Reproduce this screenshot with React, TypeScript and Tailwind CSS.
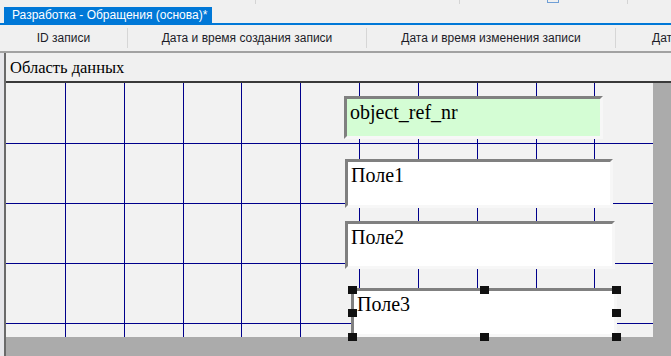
import React from 'react';

const uiFont = { fontFamily: '"Liberation Sans", Arial, sans-serif' };
const serifFont = { fontFamily: '"Liberation Serif", "Times New Roman", serif' };

const vLines = [59, 118, 177, 235, 294, 353, 412, 471, 530, 588];
const hLines = [60, 120, 180, 240];

function GridLines() {
  return (
    <svg className="absolute inset-0" width="647" height="254" shapeRendering="crispEdges">
      {vLines.map((x) => (
        <line key={'v' + x} x1={x + 0.5} y1={0} x2={x + 0.5} y2={254} stroke="#00008b" strokeWidth={1} />
      ))}
      {hLines.map((y) => (
        <line key={'h' + y} x1={0} y1={y + 0.5} x2={647} y2={y + 0.5} stroke="#00008b" strokeWidth={1} />
      ))}
    </svg>
  );
}

function Field({ label, className }: { label: string; className: string }) {
  return (
    <div
      className={`absolute border-[3px] border-t-[#808080] border-l-[#808080] border-r-[#f7f7f7] border-b-[#f7f7f7] px-[3px] pt-[2px] text-[20px] leading-[23px] text-black ${className}`}
      style={serifFont}
    >
      {label}
    </div>
  );
}

function Handle({ className }: { className: string }) {
  return <div className={`absolute w-[9px] h-[8px] bg-[#111] ${className}`} />;
}

export default function App() {
  return (
    <div className="w-[671px] h-[356px] bg-[#f0f0f0] flex flex-col overflow-hidden">
      {/* остаток панели сверху */}
      <div className="h-[7px] relative">
        <div className="absolute left-[255px] top-0 w-px h-[4px] bg-[#d4d4d4]" />
        <div className="absolute left-[459px] top-0 w-px h-[4px] bg-[#d4d4d4]" />
        <div className="absolute left-[547px] top-0 w-[12px] h-[3px] border-b border-x border-[#6f9fd6]" />
        <div className="absolute left-[627px] top-0 w-px h-[4px] bg-[#d4d4d4]" />
      </div>

      <div className="h-[16px] flex pl-[4px]">
        <div className="bg-[#0078d7] text-white text-[12px] leading-[16px] pl-[8px] pr-[5px] whitespace-nowrap" style={uiFont}>
          Разработка - Обращения (основа)*
        </div>
      </div>
      <div className="h-[2px] bg-[#0078d7]" />

      {/* заголовки колонок */}
      <div className="h-[26px] flex text-[12px] text-[#1c1c28] whitespace-nowrap" style={uiFont}>
        <div className="w-[127px] flex items-center justify-center">ID записи</div>
        <div className="w-px my-[3px] bg-[#d6d6d6]" />
        <div className="w-[238px] flex items-center justify-center">Дата и время создания записи</div>
        <div className="w-px my-[3px] bg-[#d6d6d6]" />
        <div className="w-[248px] flex items-center justify-center">Дата и время изменения записи</div>
        <div className="w-px my-[3px] bg-[#d6d6d6]" />
        <div className="flex-1 flex items-center pl-[36px] overflow-hidden">Дата и время</div>
      </div>
      <div className="h-[2px] bg-[#a2a2a2]" />

      <div className="flex-1 flex">
        <div className="w-[4px] bg-[#e6e6ea]" />
        <div className="w-[2px] bg-[#6a6a6a]" />
        <div className="flex-1 flex flex-col">
          <div className="h-[30px] border-b-2 border-[#3a3a3a] pl-[4px] pt-[5px] text-[16.5px] leading-[20px] text-black" style={serifFont}>
            Область данных
          </div>
          <div className="flex-1 flex">
            <div className="w-[647px] relative bg-[#f2f2f2]">
              <GridLines />
              <Field label="object_ref_nr" className="left-[338px] top-[13px] w-[259px] h-[43px] bg-[#d4fdd4]" />
              <Field label="Поле1" className="left-[339px] top-[76px] w-[268px] h-[49px] bg-white" />
              <Field label="Поле2" className="left-[339px] top-[138px] w-[270px] h-[48px] bg-white" />
              <Field label="Поле3" className="left-[345px] top-[205px] w-[266px] h-[49px] bg-white" />
              <Handle className="left-[342px] top-[203px]" />
              <Handle className="left-[474px] top-[203px]" />
              <Handle className="left-[606px] top-[203px]" />
              <Handle className="left-[342px] top-[226px]" />
              <Handle className="left-[606px] top-[226px]" />
              <Handle className="left-[342px] top-[250px]" />
              <Handle className="left-[474px] top-[250px]" />
              <Handle className="left-[606px] top-[250px]" />
            </div>
            <div className="flex-1 bg-[#ababab]" />
          </div>
          <div className="h-[19px] bg-[#ababab]" />
        </div>
      </div>
    </div>
  );
}
